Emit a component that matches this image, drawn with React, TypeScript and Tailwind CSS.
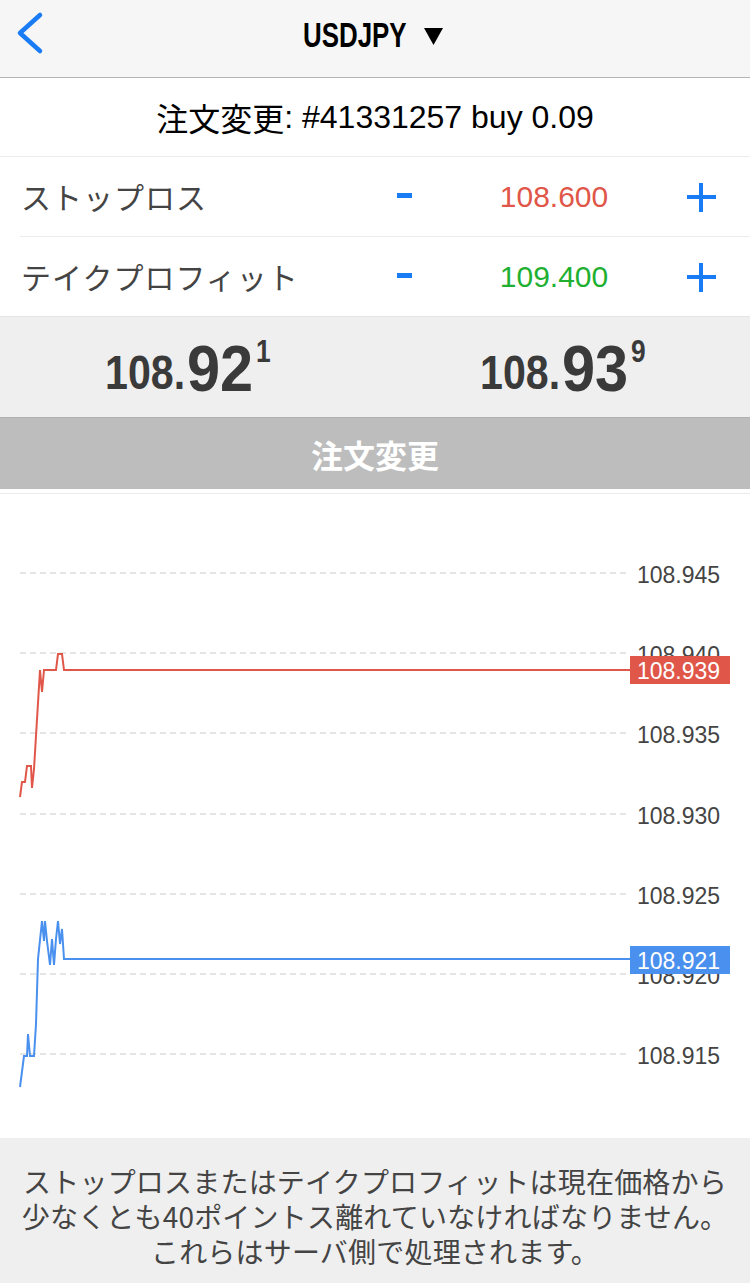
import React from "react";

const jp = { fontFamily: '"Noto Sans CJK JP", "Liberation Sans", sans-serif' };
const ar = { fontFamily: '"Liberation Sans", Arial, sans-serif' };

function Price({ a, b, c }: { a: string; b: string; c: string }) {
  return (
    <div className="flex-1 flex justify-center items-start text-[#3a3a3a] font-bold" style={ar}>
      <span className="inline-block w-[80px] mt-[31px] text-[49px] leading-none whitespace-nowrap">
        <span className="inline-block origin-left scale-x-[0.84]">{a}</span>
      </span>
      <span className="inline-block w-[68px] mt-[20px] ml-[2px] text-[64px] leading-none whitespace-nowrap">
        <span className="inline-block origin-left scale-x-[0.93]">{b}</span>
      </span>
      <span className="inline-block w-[15px] mt-[19px] ml-[1px] text-[31px] leading-none whitespace-nowrap">
        <span className="inline-block origin-left scale-x-[0.85]">{c}</span>
      </span>
    </div>
  );
}

function Row({ label, value, color }: { label: string; value: string; color: string }) {
  return (
    <div className="h-[79px] flex items-center relative">
      <div className="pl-[21px] text-[30px] tracking-[1px] text-[#444]" style={jp}>{label}</div>
      <div className="absolute left-[397px] top-[36px] w-[15px] h-[5px] bg-[#1a7cf5]" />
      <div className="absolute left-[441px] w-[226px] text-center text-[30px]" style={{ ...ar, color }}>{value}</div>
      <div className="absolute left-[687px] top-[26px] w-[29px] h-[29px]">
        <div className="absolute left-0 top-[12px] w-[29px] h-[4px] bg-[#1a7cf5]" />
        <div className="absolute left-[12px] top-0 w-[4px] h-[29px] bg-[#1a7cf5]" />
      </div>
    </div>
  );
}

const grid = [
  { y: 79, t: "108.945" },
  { y: 159, t: "108.940" },
  { y: 239, t: "108.935" },
  { y: 320, t: "108.930" },
  { y: 400, t: "108.925" },
  { y: 480, t: "108.920" },
  { y: 560, t: "108.915" },
];

function Chart() {
  const off = 495;
  const red = [
    [20, 798], [22, 783], [25, 783], [27, 767], [31, 767], [32, 789], [34, 770], [40, 671], [42, 693], [44, 671], [56, 671], [58, 655], [62, 655], [64, 671], [630, 671],
  ];
  const blue = [
    [20, 1088], [24, 1057], [27, 1057], [28, 1035], [30, 1057], [34, 1057], [36, 1025], [38, 960], [42, 922], [44, 942], [45, 922], [47, 942], [50, 966], [52, 940], [54, 966], [56, 940], [58, 922], [60, 945], [62, 930], [64, 960], [630, 960],
  ];
  const toPts = (p: number[][]) => p.map(([x, y]) => `${x},${y - off}`).join(" ");
  return (
    <div className="relative h-[644px] bg-white">
      <svg width="750" height="644" className="absolute left-0 top-0">
        {grid.map((g) => (
          <g key={g.t}>
            <line x1="20" x2="628" y1={g.y} y2={g.y} stroke="#cacaca" strokeWidth="1" strokeDasharray="6 4" />
            <text x="637" y={g.y + 10} fontSize="23" fill="#444" fontFamily="Liberation Sans, sans-serif">{g.t}</text>
          </g>
        ))}
        <polyline points={toPts(red)} fill="none" stroke="#e0574a" strokeWidth="2" />
        <polyline points={toPts(blue)} fill="none" stroke="#4a90ee" strokeWidth="2" />
        <rect x="630" y="162" width="100" height="28" fill="#e0574a" />
        <text x="637" y="185" fontSize="23" fill="#fff" fontFamily="Liberation Sans, sans-serif">108.939</text>
        <rect x="630" y="452" width="100" height="28" fill="#4a90ee" />
        <text x="637" y="475" fontSize="23" fill="#fff" fontFamily="Liberation Sans, sans-serif">108.921</text>
      </svg>
    </div>
  );
}

export default function App() {
  return (
    <div className="w-[750px] h-[1283px] bg-white flex flex-col overflow-hidden">
      <div className="h-[78px] bg-[#f6f6f6] border-b border-[#b4b4b4] relative flex items-start justify-center pt-[17px]">
        <svg className="absolute left-0 top-0" width="60" height="70" viewBox="0 0 60 70">
          <path d="M40 15 L20 33 L40 51" fill="none" stroke="#1a7cf5" strokeWidth="4.5" strokeLinecap="round" strokeLinejoin="round" />
        </svg>
        <span className="inline-block w-[102px] ml-[-5px] text-black font-bold text-[35px] leading-none whitespace-nowrap" style={ar}>
          <span className="inline-block origin-left scale-x-[0.74]">USDJPY</span>
        </span>
        <svg className="ml-[19px] mt-[11px]" width="19" height="17" viewBox="0 0 19 17">
          <polygon points="0,0 19,0 9.5,17" fill="#000" />
        </svg>
      </div>
      <div className="h-[79px] border-b border-[#ececec] flex items-center justify-center text-[32px] text-black" style={jp}>
        注文変更<span style={ar}>: #41331257 buy 0.09</span>
      </div>
      <div>
        <Row label="ストップロス" value="108.600" color="#e0574a" />
        <div className="ml-[20px] h-px bg-[#ececec]" />
        <Row label="テイクプロフィット" value="109.400" color="#1fb032" />
      </div>
      <div className="h-[101px] bg-[#efefef] border-t border-[#e4e4e4] flex">
        <Price a="108." b="92" c="1" />
        <Price a="108." b="93" c="9" />
      </div>
      <div className="h-[72px] bg-[#bdbdbd] border-t border-[#b0b0b0] flex items-center justify-center text-white text-[32px] font-bold" style={jp}>
        注文変更
      </div>
      <div className="h-[5px] bg-white border-b border-[#ececec]" />
      <Chart />
      <div className="flex-1 bg-[#efefef] flex flex-col items-center pt-[26px] text-[28px] leading-[35px] tracking-[0.2px] text-[#444] text-center" style={jp}>
        <div>ストップロスまたはテイクプロフィットは現在価格から</div>
        <div>少なくとも40ポイントス離れていなければなりません。</div>
        <div>これらはサーバ側で処理されます。</div>
      </div>
    </div>
  );
}
